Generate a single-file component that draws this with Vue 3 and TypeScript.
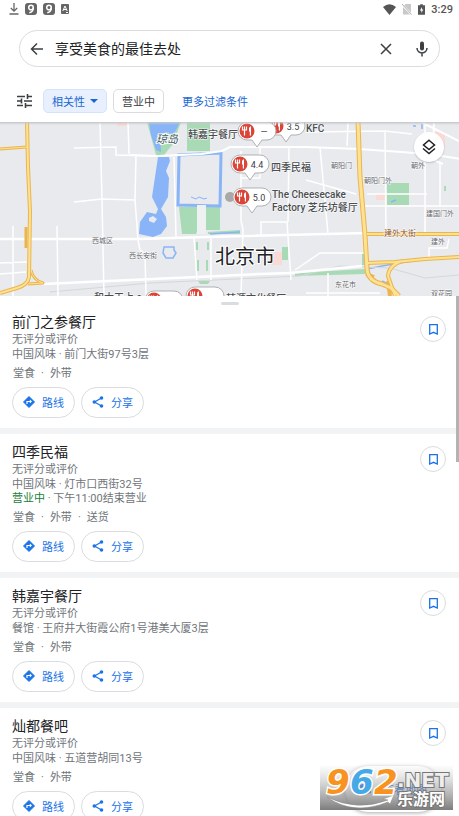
<script setup lang="ts">
import { ref } from 'vue'

interface Place {
  name: string
  kind: string
  address: string
  closes?: string
  services: string[]
}

interface Marker {
  x: number
  y: number
  rating: string
}

const query = ref('享受美食的最佳去处')

const places: Place[] = [
  { name: '前门之参餐厅', kind: '中国风味', address: '前门大街97号3层', services: ['堂食', '外带'] },
  {
    name: '四季民福',
    kind: '中国风味',
    address: '灯市口西街32号',
    closes: '下午11:00结束营业',
    services: ['堂食', '外带', '送货'],
  },
  { name: '韩嘉宇餐厅', kind: '餐馆', address: '王府井大街霞公府1号港美大厦3层', services: ['堂食', '外带'] },
  { name: '灿都餐吧', kind: '中国风味', address: '五道营胡同13号', services: ['堂食', '外带'] },
]

const markers: Marker[] = [
  { x: 276, y: 126, rating: '3.5' },
  { x: 247, y: 131, rating: '—' },
  { x: 240, y: 164, rating: '4.4' },
  { x: 242, y: 197, rating: '5.0' },
  { x: 154, y: 300, rating: '—' },
  { x: 195, y: 296, rating: '—' },
]
</script>

<template>
  <div class="app">
    <header class="top">
      <div class="status">
        <div class="status-group">
          <svg width="10" height="12" viewBox="0 0 10 12"><path d="M5 0v8M1.800 5 5 8.200 8.200 5M0.500 11h9" fill="none" stroke="#666" stroke-width="1.300" /></svg>
          <svg v-for="n in 2" :key="n" width="12" height="12" viewBox="0 0 12 12">
            <rect width="12" height="12" rx="3" fill="#666" />
            <circle cx="6" cy="4.500" r="2.300" fill="none" stroke="#fff" stroke-width="1.500" />
            <path d="M8.300 4.500c0 3-1 4.700-4 5.300" fill="none" stroke="#fff" stroke-width="1.500" />
          </svg>
          <svg class="small" width="8" height="10" viewBox="0 0 8 10">
            <rect width="8" height="10" rx="1" fill="#666" />
            <path d="M1.800 7 4 2l2.200 5M2.500 5.500h3M5 8.500h2" fill="none" stroke="#fff" stroke-width="1" />
          </svg>
        </div>
        <div class="status-group system">
          <svg width="13" height="11" viewBox="0 0 13 11"><path d="M0 3Q6.500-2.500 13 3L6.500 11z" fill="#555" /></svg>
          <svg width="10" height="12" viewBox="0 0 10 12">
            <path d="M3.500 1H9v10.500H1V3.500z" fill="#c8c8c8" />
            <path d="M0 1.500 10 12" stroke="#fff" stroke-width="2" /><path d="M0 1 9.500 11.500" stroke="#aaa" stroke-width="1" />
          </svg>
          <svg width="7" height="11" viewBox="0 0 8 12">
            <path d="M2.500 0h3v1.200H8V12H0V1.200h2.500z" fill="#555" /><path d="M4.600 3 2.200 7h1.600v3l2.300-4H4.600z" fill="#fff" />
          </svg>
          <span class="clock">3:29</span>
        </div>
      </div>

      <form class="search" @submit.prevent>
        <button type="button" class="icon-btn" aria-label="返回">
          <svg width="14" height="14" viewBox="0 0 14 14"><path d="M13 7H1.500M7 1.500 1.500 7 7 12.500" fill="none" stroke="#3c4043" stroke-width="1.500" /></svg>
        </button>
        <input v-model="query" class="query" type="text" aria-label="搜索" />
        <button type="button" class="icon-btn" aria-label="清除" @click="query = ''">
          <svg width="12" height="12" viewBox="0 0 12 12"><path d="m1 1 10 10M11 1 1 11" stroke="#3c4043" stroke-width="1.500" /></svg>
        </button>
        <button type="button" class="icon-btn" aria-label="语音">
          <svg width="12" height="16" viewBox="0 0 12 16">
            <rect x="4" y="0.500" width="4" height="9" rx="2" fill="#3c4043" />
            <path d="M1 7c0 6.500 10 6.500 10 0M6 12v3.500" fill="none" stroke="#3c4043" stroke-width="1.500" />
          </svg>
        </button>
      </form>

      <nav class="filters">
        <button type="button" class="tune" aria-label="筛选">
          <svg width="15" height="14" viewBox="0 0 15 14">
            <path d="M0 2.500h8M10.500 2.500H15M0 7h4.500M7 7h8M0 11.500h6M8.500 11.500H15M10.500 0v5M4.500 4.500v5M8.500 9v5" fill="none" stroke="#3c4043" stroke-width="1.600" />
          </svg>
        </button>
        <button type="button" class="chip active">
          相关性
          <svg width="8" height="4" viewBox="0 0 8 4"><path d="M0 0h8L4 4z" fill="#1967d2" /></svg>
        </button>
        <button type="button" class="chip">营业中</button>
        <a href="#" class="more">更多过滤条件</a>
      </nav>
    </header>

    <section class="map">
      <svg class="map-art" viewBox="0 122 459 174" preserveAspectRatio="xMidYMid slice">
        <rect y="122" width="459" height="174" fill="#e8eaed" />

        <g fill="#a8dab5">
          <path d="M147 122h34l-8 22-9 11h-8z" />
          <path d="M187 122h23v29h-23z" />
          <path d="M179 207h18v24l-1 3h-14z" />
          <path d="M206 207h14v23h-14z" />
          <path d="M208 232l32-2v4h-32z" />
          <path d="M387 183h22v22h-22z" />
          <path d="M282 247h6v13h-6z" />
          <path d="M362 254h3v11h-3zM444 186h2v5h-2z" />
          <path d="M295 273l70-4v5l-70 2z" />
          <path d="M196 242h2v8h-2zM207 242h2v8h-2zM197 260h2v11h-2zM206 260h2v11h-2zM198 281h12l-2 3h-8z" />
        </g>
        <path d="M117 122h10v4h-10zM271 252h11v13h-11zM376 194h9v6h-9zM434 132h11v16h-11z" fill="#fad9d7" />
        <g fill="#8ab4f8">
          <path d="M149 122h31l-6 12-4 3-1-5-9 2 1 18-5-2-5-15z" />
          <path d="M158 157h11l1 4-4 10 3 7-1 19-7 12 5 8 1 9-6 8-8 3-14-3 1-12 7-10 9 2 2-5-6-12z" />
        </g>
        <path d="M149 218l4-2 4 3-3 4-5-2z" fill="#e8eaed" />
        <path d="M179 155l42-2-1 53-42-1z" fill="#e8eaed" stroke="#8ab4f8" stroke-width="3" />
        <path d="M191 197l5 2 3-2 5 2 3-1" fill="none" stroke="#8ab4f8" />
        <path d="M197 205h9v29h-9z" fill="#eef0f2" />
        <path d="M164 247h10v3l2 3-3 5h-7l-3-5z" fill="none" stroke="#8ab4f8" stroke-width="1.500" />
        <path d="M210 234l30-2M367 269l15-3 30-5M382 281l9 5M422 122v7M413 126h3M391 202l5-2" fill="none" stroke="#8ab4f8" stroke-width="1.500" />

        <path d="M50 292l100-9 65-3 85-4 40-10 50 2 35 10 34-3" fill="none" stroke="#d5d8db" />
        <g fill="none" stroke="#fff" stroke-width="1.500">
          <path d="M100 122l2 78 2 96M128 122l1 32M74 148l42-1v8l37 1M136 156l-1 44 3 40 2 10 5 4 1 42" />
          <path d="M74 202l28-3 33 1M57 226l1 70M13 226v70M0 263l27-1M0 274l26-2" />
          <path d="M174 157l2 81M194 238l3 42M211 238v42M241 151v70l2 8-2 67M260 147v31h-18M289 148l-1 74M261 236v-14h26l4 58" />
          <path d="M306 132l79-1 27 3M348 122l-1 24M385 132l1 101M320 147l8 87M367 194h60M365 206h94M425 122v111M440 162v44M306 180l50 14" />
          <path d="M295 270l25-17h44M328 273v23M429 257v-9h18l2-9M306 293h74" />
        </g>
        <g fill="none" stroke="#fff" stroke-width="2.500">
          <path d="M0 239h139l67-2 161-4" />
          <path d="M43 284l110-5 107-5 30-1 72-7" />
          <path d="M130 155l28 1 43-2 21-3 8-4h76l53 2 70 5 31 5" stroke-width="2" />
          <path d="M434 122l-1 35M421 122l38 19M425 156l18 8" stroke-width="2" />
        </g>

        <g fill="none" stroke-linejoin="round">
          <g stroke="#ecb44c" stroke-width="4">
            <path d="M27 122l1 45 2 45-1 65q-1 8-12 11l-17 5" />
            <path d="M0 149l27-2M26 227v21M31 270q2 10 12 13l-15 1" stroke-width="3" />
            <path d="M358 122l2 55 5 58 2 34q1 12 15 15l9 4 8 8" stroke-width="5" />
            <path d="M367 234h92M367 263l28-1 30-3 34-2M402 261q-13 4-14 15l7 20M366 274l8 3M388 281l2 15" />
          </g>
          <g stroke="#fde293" stroke-width="2">
            <path d="M27 122l1 45 2 45-1 65q-1 8-12 11l-17 5" />
            <path d="M0 149l27-2M31 270q2 10 12 13l-15 1" stroke-width="1" />
            <path d="M358 122l2 55 5 58 2 34q1 12 15 15l9 4 8 8" stroke-width="3" />
            <path d="M367 234h92M367 263l28-1 30-3 34-2M402 261q-13 4-14 15l7 20" />
          </g>
        </g>

        <g class="area">
          <text x="92" y="243">西城区</text>
          <text x="129" y="258">西长安街</text>
          <text x="331" y="168">朝阳门</text>
          <text x="364" y="183">朝阳门外</text>
          <text x="411" y="168">朝外</text>
          <text x="426" y="216">建国门外</text>
          <text x="431" y="244">建外</text>
          <text x="335" y="287">东花市</text>
          <text x="431" y="296">双花园</text>
          <text x="384" y="236" class="street">建外大街</text>
        </g>
        <text x="156" y="143" class="island">琼岛</text>
        <text x="215" y="264" class="city">北京市</text>
        <g class="poi">
          <text x="188" y="138">韩嘉宇餐厅</text>
          <text x="306" y="132">KFC</text>
          <text x="271" y="171">四季民福</text>
          <text x="272" y="198">The Cheesecake</text>
          <text x="272" y="211">Factory 芝乐坊餐厅</text>
          <text x="94" y="301">和木天上 a</text>
          <text x="226" y="302">韩源文化餐厅</text>
        </g>

        <circle cx="230" cy="197" r="5" fill="#a8a8a8" />
        <g v-for="(m, i) in markers" :key="i" :transform="`translate(${m.x} ${m.y})`">
          <path d="M0-9h20a9 9 0 0 1 0 18h-5l-5 7-5-7H0A9 9 0 0 1 0-9z" fill="#fff" stroke="#aeb1b5" />
          <circle r="7.500" fill="#db4437" />
          <path d="M-4.500-4.500v3.500h4v-3.500M-2.500-4.500v9" fill="none" stroke="#fff" stroke-width="1.200" />
          <path d="M2 .500v-3q0-2 2-2.200v9.200H2.800V.500z" fill="#fff" />
          <text x="17" y="4" class="rating">{{ m.rating }}</text>
        </g>
      </svg>
      <button type="button" class="layers" aria-label="图层">
        <svg width="14" height="16" viewBox="0 0 14 16">
          <path d="M7 1.200 12.500 6 7 10.500 1.500 6zM1 9.500l6 5 6-5" fill="none" stroke="#202124" stroke-width="1.500" />
        </svg>
      </button>
    </section>

    <main class="sheet">
      <div class="scroll">
        <div class="handle"><span></span></div>
        <article v-for="p in places" :key="p.name" class="card">
          <div class="info">
            <h2>{{ p.name }}</h2>
            <p>无评分或评价</p>
            <p>{{ p.kind }} · {{ p.address }}</p>
            <p v-if="p.closes" class="hours"><span class="open">营业中</span> · {{ p.closes }}</p>
            <ul class="services">
              <li v-for="s in p.services" :key="s">{{ s }}</li>
            </ul>
            <div class="actions">
              <button type="button" class="pill">
                <svg width="12" height="12" viewBox="0 0 12 12">
                  <path d="M6 0.500 11.500 6 6 11.500 0.500 6z" fill="#1a73e8" stroke="#1a73e8" stroke-linejoin="round" />
                  <path d="M4 8V5.500h3.500" fill="none" stroke="#fff" stroke-width="1.200" /><path d="M6.800 3.500 9 5.500l-2.200 2z" fill="#fff" />
                </svg>
                路线
              </button>
              <button type="button" class="pill">
                <svg width="12" height="12" viewBox="0 0 12 12">
                  <path d="M9.500 2 2.500 6l7 4" fill="none" stroke="#1a73e8" stroke-width="1.200" />
                  <g fill="#1a73e8"><circle cx="9.500" cy="2" r="1.800" /><circle cx="2.300" cy="6" r="1.800" /><circle cx="9.500" cy="10" r="1.800" /></g>
                </svg>
                分享
              </button>
            </div>
          </div>
          <button type="button" class="save" :aria-label="`收藏 ${p.name}`">
            <svg width="9" height="11" viewBox="0 0 9 11"><path d="M0.700 0.700h7.600v9.300L4.500 8.300 0.700 10z" fill="none" stroke="#1a73e8" stroke-width="1.300" /></svg>
          </button>
        </article>
      </div>
      <div class="thumb"></div>
    </main>

    <button type="button" class="view-map">
      <svg width="12" height="10" viewBox="0 0 12 10"><path d="M0 1l4-1 4 1 4-1v9l-4 1-4-1-4 1z" fill="#1a73e8" /></svg>
      查看地图
    </button>
    <div class="stamp">
      <svg width="133" height="44" viewBox="0 0 133 44">
        <defs>
          <linearGradient id="shade" x1="0" y1="0" x2="0" y2="1">
            <stop offset="0" stop-color="#b8b8b8" stop-opacity="0.050" />
            <stop offset="0.500" stop-color="#999" stop-opacity="0.550" />
            <stop offset="1" stop-color="#757575" stop-opacity="0.950" />
          </linearGradient>
        </defs>
        <rect width="133" height="44" fill="url(#shade)" />
        <path d="M7 31q30 15 61 3l-5-1 11-4-4 9-2-2Q33 50 7 31z" fill="#fff" stroke="#888" stroke-width="0.500" />
        <g class="digits">
          <text x="6" y="28" fill="#f7931e">9</text>
          <text x="30" y="28" fill="#45a9e6">6</text>
          <text x="54" y="28" fill="#f7931e">2</text>
        </g>
        <text x="77" y="21" class="net">.NET</text>
        <text x="77" y="39" class="site">乐游网</text>
      </svg>
    </div>
  </div>
</template>

<style>
body {
  margin: 0;
  background: #fff;
}
</style>

<style scoped>
.app {
  position: relative;
  display: flex;
  flex-direction: column;
  height: 100vh;
  overflow: hidden;
  font-family: Roboto, 'Noto Sans CJK SC', sans-serif;
  font-size: 11px;
  color: #202124;
}
button {
  font: inherit;
  color: inherit;
  padding: 0;
  border: 0;
  background: none;
}
svg {
  display: block;
  flex: none;
}
.status,
.status-group {
  display: flex;
  align-items: center;
}
.status {
  justify-content: space-between;
  height: 18px;
  padding: 0 6px 0 9px;
}
.status-group {
  gap: 6px;
}
.clock {
  font-size: 11px;
  font-weight: 500;
  color: #555;
}
.search {
  display: flex;
  align-items: center;
  box-sizing: border-box;
  height: 37px;
  margin: 12px 19px 0;
  padding: 0 5px;
  border: 1px solid #dadce0;
  border-radius: 19px;
}
.icon-btn {
  display: grid;
  place-items: center;
  width: 24px;
  height: 32px;
}
.icon-btn + .icon-btn {
  margin-left: 12px;
}
.query {
  flex: 1;
  min-width: 0;
  padding: 0 0 2px 6px;
  border: 0;
  outline: 0;
  background: none;
  font: inherit;
  font-size: 14px;
  color: #202124;
}
.filters {
  display: flex;
  align-items: center;
  height: 24px;
  padding: 22px 17px 9px;
}
.tune {
  width: 26px;
}
.chip {
  display: flex;
  align-items: center;
  gap: 5px;
  box-sizing: border-box;
  height: 24px;
  margin-right: 6px;
  padding: 0 8px 1px;
  border: 1px solid #dadce0;
  border-radius: 5px;
  color: #3c4043;
}
.chip.active {
  background: #e8f0fe;
  border-color: #d2e3fc;
  color: #1967d2;
}
.more {
  margin-left: 12px;
  padding-bottom: 1px;
  color: #1967d2;
  text-decoration: none;
}
.map {
  position: relative;
  flex: none;
  height: 174px;
}
.map-art {
  width: 100%;
  height: 100%;
}
.map::before {
  content: '';
  position: absolute;
  inset: 0 0 auto;
  height: 3px;
  background: linear-gradient(#c4c6c9, #e8eaed00);
}
.area {
  font-size: 7px;
  fill: #5f6368;
  stroke: #fff;
  stroke-width: 1px;
  paint-order: stroke;
}
.area .street {
  font-size: 8px;
  fill: #8a4b12;
}
.island {
  font-size: 11px;
  font-style: italic;
  fill: #3c5560;
  stroke: #fff;
  stroke-width: 2px;
  paint-order: stroke;
}
.city {
  font-size: 20px;
  fill: #202124;
  stroke: #fff;
  stroke-width: 2px;
  paint-order: stroke;
}
.poi {
  font-size: 10px;
  font-weight: 500;
  fill: #4a4d51;
  stroke: #fff;
  stroke-width: 1px;
  paint-order: stroke;
}
.rating {
  font-size: 9px;
  text-anchor: middle;
  fill: #3c4043;
}
.layers {
  position: absolute;
  top: 10px;
  right: 15px;
  display: grid;
  place-items: center;
  width: 30px;
  height: 30px;
  border-radius: 50%;
  background: #fff;
  box-shadow: 0 1px 2px #0003;
}
.sheet {
  position: relative;
  flex: 1;
  min-height: 0;
}
.scroll {
  height: 100%;
  overflow-y: auto;
  scrollbar-width: none;
}
.thumb {
  position: absolute;
  top: 0;
  right: 0;
  width: 3px;
  height: 32%;
  background: #b3b3b3;
}
.handle {
  display: flex;
  justify-content: center;
  height: 8px;
}
.handle span {
  width: 18px;
  height: 3px;
  margin-top: 6px;
  border-radius: 2px;
  background: #dadce0;
}
.card {
  display: flex;
  justify-content: space-between;
  padding: 8px 13px 10px 12px;
  border-bottom: 6px solid #f1f3f4;
}
h2 {
  margin: 0;
  font-size: 14px;
  font-weight: 400;
  line-height: 20px;
}
p {
  margin: 0;
  line-height: 15px;
  color: #70757a;
}
.hours {
  line-height: 14px;
}
.open {
  color: #188038;
}
.services {
  display: flex;
  margin: 3px 0 5px;
  padding: 0 0 0 1px;
  list-style: none;
  line-height: 17px;
  color: #70757a;
}
.services li + li::before {
  content: '·';
  margin: 0 6px;
}
.actions {
  display: flex;
  gap: 6px;
}
.pill {
  display: flex;
  align-items: center;
  gap: 7px;
  box-sizing: border-box;
  height: 31px;
  padding: 0 10px 1px;
  border: 1px solid #dadce0;
  border-radius: 16px;
  color: #1a73e8;
}
.save {
  display: grid;
  place-items: center;
  box-sizing: border-box;
  width: 26px;
  height: 26px;
  margin-top: 4px;
  border: 1px solid #dadce0;
  border-radius: 50%;
}
.view-map {
  position: absolute;
  right: 18px;
  bottom: 4px;
  display: flex;
  align-items: center;
  justify-content: center;
  gap: 12px;
  width: 96px;
  height: 46px;
  border-radius: 23px;
  background: #fff;
  box-shadow: 0 1px 4px #0005;
  color: #1a73e8;
}
.stamp {
  position: absolute;
  right: 6px;
  bottom: 6px;
  font-weight: 700;
}
.digits,
.net {
  font-family: 'DejaVu Sans', sans-serif;
}
.digits {
  font-size: 34px;
  font-style: italic;
  stroke: #fff;
  stroke-width: 3px;
  paint-order: stroke;
}
.net {
  font-size: 20px;
  fill: #eee;
  stroke: #777;
  stroke-width: 2px;
  paint-order: stroke;
}
.site {
  font-size: 16px;
  fill: #fff;
  stroke: #777;
  stroke-width: 2px;
  paint-order: stroke;
}
</style>
